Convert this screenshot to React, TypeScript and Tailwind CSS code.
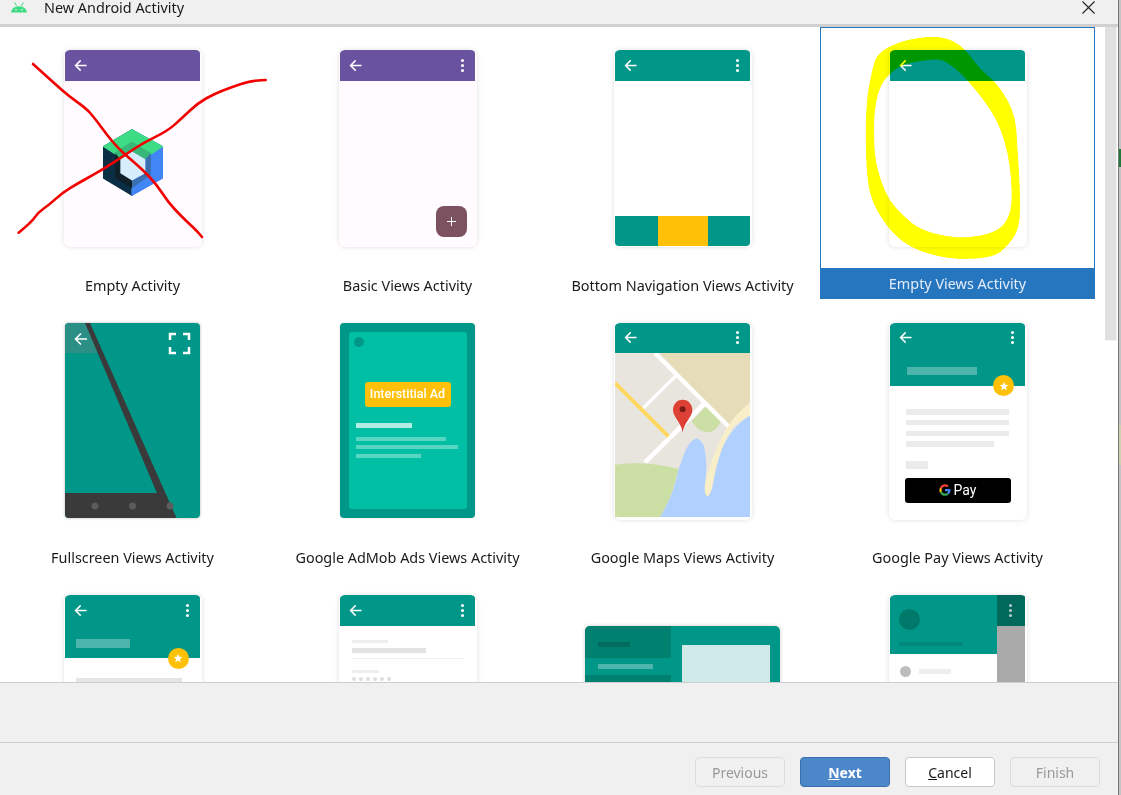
import React from "react";

const smooth = (p: number[][], closed = true) => {
  const n = p.length;
  const mid = (a: number[], b: number[]) => [(a[0] + b[0]) / 2, (a[1] + b[1]) / 2];
  if (closed) {
    const s = mid(p[n - 1], p[0]);
    let d = `M${s[0]} ${s[1]}`;
    for (let i = 0; i < n; i++) {
      const m = mid(p[i], p[(i + 1) % n]);
      d += `Q${p[i][0]} ${p[i][1]} ${m[0]} ${m[1]}`;
    }
    return d + "Z";
  }
  let d = `M${p[0][0]} ${p[0][1]}`;
  for (let i = 1; i < n - 1; i++) {
    const m = mid(p[i], p[i + 1]);
    d += `Q${p[i][0]} ${p[i][1]} ${m[0]} ${m[1]}`;
  }
  return d + `L${p[n - 1][0]} ${p[n - 1][1]}`;
};

const Arrow = () => (
  <svg width="13" height="13" viewBox="0 0 14 14" fill="none" stroke="#fff" strokeWidth="1.6">
    <path d="M13.500 7H2M7.200 1.500 1.700 7l5.500 5.500" />
  </svg>
);

const Dots = ({ color = "bg-white" }: { color?: string }) => (
  <div className="flex flex-col gap-[2px]">
    <span className={`w-[3px] h-[3px] rounded-full ${color}`} />
    <span className={`w-[3px] h-[3px] rounded-full ${color}`} />
    <span className={`w-[3px] h-[3px] rounded-full ${color}`} />
  </div>
);

const AppBar = ({ color = "bg-[#009688]", dots = true, h = "h-[30.5px]" }: { color?: string; dots?: boolean; h?: string }) => (
  <div className={`${h} ${color} rounded-t-[4px] shrink-0`}>
    <div className="h-[30px] flex items-center justify-between pl-[9px] pr-[11px]">
      <Arrow />
      {dots && <Dots />}
    </div>
  </div>
);

const Phone = ({ children, bg = "bg-white" }: { children?: React.ReactNode; bg?: string }) => (
  <div className={`relative w-[138px] h-[197px] rounded-[6px] px-[1.5px] ${bg} shadow-[0_0_5px_rgba(0,0,0,0.13)] flex flex-col overflow-hidden`}>
    {children}
  </div>
);

const Star = ({ className }: { className: string }) => (
  <div className={`absolute w-[21px] h-[21px] rounded-full bg-[#ffc107] flex items-center justify-center ${className}`}>
    <svg width="10" height="10" viewBox="0 0 24 24" fill="#fff"><path d="M12 2l3 7 7.500 .6-5.700 5 1.800 7.400L12 18l-6.600 4 1.800-7.400-5.700-5L9 9z" /></svg>
  </div>
);

const EmptyCompose = () => (
  <Phone bg="bg-[#fffbfe]">
    <AppBar color="bg-[#6952a0]" dots={false} />
    <div className="flex-1 flex items-start justify-center pt-[48.5px]">
      <svg width="60" height="67" viewBox="68 58 180 200" strokeLinejoin="round">
        <path d="M70 110 155 60V256L70 205Z" fill="#0a2f44" stroke="#0a2f44" strokeWidth="4" />
        <path d="M246 110 155 60V256L246 205Z" fill="#4285f4" stroke="#4285f4" strokeWidth="4" />
        <path d="M155 60 246 110 212 132 155 100 105 132 70 110Z" fill="#3ddc84" stroke="#3ddc84" strokeWidth="4" />
        <path d="M155 95 212 130 195 148 155 125 120 148 100 130Z" fill="#38b878" />
        <path d="M105 130 120 148V190L155 212V235L105 205Z" fill="#101f28" />
        <path d="M212 130V195L155 235V212L195 190V148Z" fill="#3a6fb0" />
        <path d="M155 125 195 148V190L155 212 120 190V148Z" fill="#d6eefb" />
      </svg>
    </div>
  </Phone>
);

const Basic = () => (
  <Phone bg="bg-[#fffbfe]">
    <AppBar color="bg-[#6952a0]" />
    <div className="flex-1 flex items-end justify-end pr-[8.5px] pb-[10px]">
      <div className="w-[31px] h-[31px] rounded-[8px] bg-[#7d5260] flex items-center justify-center">
        <svg width="9" height="9" viewBox="0 0 9 9" stroke="#fff" strokeWidth="1"><path d="M4.500 0v9M0 4.500h9" /></svg>
      </div>
    </div>
  </Phone>
);

const BottomNav = () => (
  <Phone>
    <AppBar />
    <div className="flex-1" />
    <div className="h-[30px] mb-[1.5px] flex rounded-b-[4px] overflow-hidden">
      <div className="w-[43px] bg-[#009688]" />
      <div className="w-[49.500px] bg-[#ffc107]" />
      <div className="flex-1 bg-[#009688]" />
    </div>
  </Phone>
);

const Fullscreen = () => (
  <div className="w-[135px] h-[195px] rounded-[4px] overflow-hidden shadow-[0_0_3px_rgba(0,0,0,0.3)]">
    <svg viewBox="0 0 135 195" className="w-full h-full">
      <rect width="135" height="195" fill="#009688" />
      <path d="M0 0H22L33 30H0Z" fill="#2b8f85" />
      <path d="M0 170H97L111 195H0Z" fill="#3a3a3a" />
      <path d="M20 0H25L111.500 195H102.500Z" fill="#3a3a3a" />
      <circle cx="30" cy="183" r="3.500" fill="#5c5c5c" />
      <circle cx="67.500" cy="183" r="3.500" fill="#5c5c5c" />
      <circle cx="105" cy="183" r="3.500" fill="#5c5c5c" />
      <path d="M22 16H11M16 10.500 10.500 16l5.500 5.500" stroke="#fff" strokeWidth="1.600" fill="none" />
      <path d="M105 17V11H111M118 11H124V17M124 24V30H118M111 30H105V24" stroke="#fff" strokeWidth="2.500" fill="none" />
    </svg>
  </div>
);

const AdMob = () => (
  <div className="w-[135px] h-[195px] rounded-[4px] bg-[#009688] px-[8.5px] py-[9px] shadow-[0_0_2px_rgba(0,0,0,0.15)]">
    <div className="relative h-full rounded-[3px] bg-[#00bfa5] pl-[7.5px] pr-[7px] pt-[50px]">
      <div className="absolute left-[5px] top-[5.500px] w-[10px] h-[10px] rounded-full bg-[#009688]" />
      <div className="ml-[8.5px] w-[86px] h-[25px] rounded-[3px] bg-[#ffc107] flex items-center justify-center text-white text-[12.5px] font-medium font-['Roboto',sans-serif] whitespace-nowrap">Interstitial Ad</div>
      <div className="mt-[16px] w-[56px] h-[5.500px] bg-white/70" />
      <div className="mt-[8.500px] w-[90px] h-[4px] bg-white/35" />
      <div className="mt-[4.500px] w-[102px] h-[4px] bg-white/35" />
      <div className="mt-[4.500px] w-[65px] h-[4px] bg-white/35" />
    </div>
  </div>
);

const Maps = () => (
  <Phone>
    <AppBar />
    <svg viewBox="45 40 405 492" className="w-[135px] h-[164px] shrink-0" preserveAspectRatio="none">
      <rect x="45" y="40" width="405" height="492" fill="#e8e5de" />
      <path d="M180 40H450V185L385 260Z" fill="#e6dcb8" />
      <path d="M275 245 318 200 362 245Q350 278 320 278 295 276 275 245Z" fill="#cbdfa5" />
      <path d="M165 40 385 260" stroke="#fff" strokeWidth="13" />
      <path d="M228 108 130 205" stroke="#fff" strokeWidth="10" />
      <path d="M315 190 135 368" stroke="#fff" strokeWidth="14" />
      <path d="M45 130 205 290" stroke="#ffd760" strokeWidth="12" />
      <path d="M45 375Q140 362 236 388 215 480 180 532H45Z" fill="#cbdfa5" />
      <path d="M450 190Q380 240 345 340 320 400 312 450 316 475 325 468 336 455 340 420 360 320 400 260 425 240 450 228Z" fill="#f8efc8" />
      <path d="M450 228Q395 260 365 330 345 390 338 440 330 470 322 470 313 465 314 440 325 370 312 320 300 294 285 297 262 310 250 350L236 388Q220 470 180 532H450Z" fill="#b0d0ff" />
      <path d="M248 180C230 180 219 195 219 210 219 232 242 245 248 277 254 245 277 232 277 210 277 195 266 180 248 180Z" fill="#dd4035" />
      <circle cx="248" cy="209" r="9" fill="#7a1a15" />
    </svg>
  </Phone>
);

const GPay = () => (
  <Phone>
    <AppBar h="h-[63px]" />
    <Star className="left-[104.5px] top-[52.5px]" />
    <div className="absolute left-[18px] top-[44px] w-[70px] h-[8.5px] bg-white/30" />
    <div className="pl-[15.5px] pt-[23.5px] flex flex-col gap-[5.3px]">
      <div className="h-[5.5px] w-[103px] bg-[#ebebeb]" />
      <div className="h-[5.5px] w-[103px] bg-[#ebebeb]" />
      <div className="h-[5.5px] w-[103px] bg-[#ebebeb]" />
      <div className="h-[5.5px] w-[88px] bg-[#ebebeb]" />
    </div>
    <div className="ml-[15.5px] mt-[14px] h-[8px] w-[22px] bg-[#ebebeb]" />
    <div className="ml-[14.5px] mt-[9px] w-[106px] h-[25px] rounded-[3px] bg-black flex items-center justify-center gap-[3px] shrink-0">
      <svg width="12" height="12" viewBox="0 0 24 24">
        <path d="M23 12.300c0-.9-.1-1.500-.2-2.200H12v4.200h6.200c-.3 1.500-1.100 2.700-2.400 3.500l3.600 2.800c2.200-2 3.600-5 3.600-8.300Z" fill="#4285f4" />
        <path d="M12 23.500c3 0 5.600-1 7.400-2.700l-3.600-2.800c-1 .7-2.300 1.100-3.800 1.100-2.900 0-5.400-2-6.300-4.600L2 17.300c1.900 3.800 5.700 6.200 10 6.200Z" fill="#34a853" />
        <path d="M5.700 14.500c-.5-1.400-.5-3 0-4.500L2 7.100C.4 10.100.4 13.900 2 17.300Z" fill="#fbbc05" />
        <path d="M12 5c1.600 0 3.100.6 4.200 1.700l3.200-3.200C17.500 1.700 14.900.6 12 .6 7.700.6 3.900 3 2 7.100L5.700 10C6.600 7.200 9.100 5 12 5Z" fill="#ea4335" />
      </svg>
      <span className="text-white text-[14px] leading-none font-['Roboto',sans-serif]">Pay</span>
    </div>
  </Phone>
);

const Scrolling = () => (
  <Phone>
    <AppBar h="h-[63px]" />
    <Star className="left-[104px] top-[52.5px]" />
    <div className="absolute left-[12px] top-[44px] w-[54px] h-[8.5px] bg-white/30" />
    <div className="ml-[10.5px] mt-[19.5px] h-[5.5px] w-[106px] bg-[#e5e5e5]" />
  </Phone>
);

const Settings = () => (
  <Phone>
    <AppBar />
    <div className="pl-[11.5px] pt-[14px]">
      <div className="h-[3px] w-[36px] bg-[#eeeeee]" />
      <div className="mt-[5px] h-[5px] w-[74px] bg-[#e2e2e2]" />
      <div className="mt-[5px] h-[1px] w-[111px] bg-[#eeeeee]" />
      <div className="mt-[11px] h-[3px] w-[27px] bg-[#eeeeee]" />
      <div className="mt-[4px] flex gap-[2.500px]">
        {[0, 1, 2, 3, 4, 5].map((i) => (
          <span key={i} className="w-[4.500px] h-[4.500px] rounded-full bg-[#dddddd]" />
        ))}
      </div>
    </div>
  </Phone>
);

const Tablet = () => (
  <div className="w-[195px] h-[120px] rounded-t-[5px] bg-[#009688] flex overflow-hidden shadow-[0_0_4px_rgba(0,0,0,0.2)]">
    <div className="w-[85.5px] shrink-0">
      <div className="h-[32px] bg-[#00806f] flex items-center pl-[12.5px] pt-[5px]"><div className="w-[32px] h-[5px] bg-[#006b5e]" /></div>
      <div className="h-[17px] flex items-center pl-[12.5px]"><div className="w-[55px] h-[5px] bg-white/30" /></div>
      <div className="h-[70px] bg-[#00806f]" />
    </div>
    <div className="ml-[11px] mt-[19px] w-[88.5px] h-[100px] bg-[#d0eaea]" />
  </div>
);

const Drawer = () => (
  <Phone>
    <div className="flex h-[59px] shrink-0">
      <div className="w-[106.5px] bg-[#009688] rounded-tl-[4px] pl-[9px] pt-[14px]">
        <div className="w-[21px] h-[21px] rounded-full bg-[#00796b]" />
        <div className="mt-[12px] w-[64px] h-[4px] bg-[#00897b]" />
      </div>
      <div className="flex-1 rounded-tr-[4px] flex flex-col">
        <div className="h-[30.5px] bg-[#00695c] flex items-center justify-center"><Dots color="bg-[#b5c9c5]" /></div>
        <div className="flex-1 bg-[#aaaaaa]" />
      </div>
    </div>
    <div className="flex flex-1">
      <div className="w-[106.5px] flex pl-[9.5px] pt-[11.5px] gap-[8px] items-start">
        <span className="w-[11.5px] h-[11.5px] rounded-full bg-[#bdbdbd]" />
        <span className="mt-[3.5px] w-[32px] h-[5px] bg-[#eeeeee]" />
      </div>
      <div className="flex-1 bg-[#aaaaaa]" />
    </div>
  </Phone>
);

const Cell = ({ label, selected, children, top = "pt-[23px]" }: { label?: string; selected?: boolean; children: React.ReactNode; top?: string }) => (
  <div className={`h-[272px] flex flex-col items-center ${top} ${selected ? "outline outline-1 -outline-offset-1 outline-[#2675bf]" : ""}`}>
    <div className="h-[197px] shrink-0 flex items-start">{children}</div>
    {label && (
      <div className={`mt-auto w-full h-[31px] flex items-center justify-center text-[14.4px] whitespace-nowrap ${selected ? "bg-[#2675bf] text-[#e4edf7]" : "text-[#1a1a1a] relative top-[2px]"}`}>
        {label}
      </div>
    )}
  </div>
);

const yellowOuter = [[235,20],[285,35],[320,65],[360,120],[400,150],[440,205],[465,265],[470,340],[475,420],[480,520],[475,600],[440,650],[400,680],[300,688],[220,675],[150,650],[100,610],[70,570],[40,520],[22,450],[18,300],[22,200],[40,110],[55,70],[110,40],[170,25]];
const yellowInner = [[235,85],[190,90],[130,100],[90,128],[60,165],[45,220],[40,280],[42,380],[60,450],[85,510],[130,560],[180,600],[260,622],[330,625],[400,610],[440,580],[458,525],[455,440],[445,370],[425,300],[395,240],[345,175],[300,125],[260,95]];
const red1 = [[33,64],[53.6,82.7],[69.6,96.7],[85.7,108],[94.6,118],[107,135],[118,148],[126.8,156],[143,170],[157,185],[168,202],[182,217],[196,230],[202,237]];
const red2 = [[18.6,232.7],[32,221.7],[37.5,213],[50,204],[62.5,192.7],[76.8,184],[92.9,175],[107,166.7],[125,155],[142.9,143],[167.9,130.7],[182,118],[198,103],[214,94],[232,87],[250,81],[265.7,80]];

const Button = ({ children, kind }: { children: React.ReactNode; kind: "off" | "next" | "cancel" }) => {
  const cls = {
    off: "bg-[#f0f0f0] border-[#dcdcdc] text-[#999999]",
    next: "bg-[#4c87c9] border-[#3c6fb0] text-white font-bold",
    cancel: "bg-white border-[#c9c9c9] text-[#1a1a1a]",
  }[kind];
  return <div className={`w-[90px] h-[30px] rounded-[4px] border flex items-center justify-center text-[14px] ${cls}`}>{children}</div>;
};

export default function App() {
  return (
    <div className="relative w-[1121px] h-[795px] bg-white overflow-hidden flex font-['Noto_Sans',sans-serif]">
      <div className="w-[1118px] h-full flex flex-col shrink-0">
        <div className="h-[27px] shrink-0 bg-[#f0f0f0] border-b-[3px] border-[#d0d0d0] flex items-start justify-between pl-[11px] pr-[23px]">
          <div className="flex items-start">
            <svg width="16" height="11" viewBox="0 0 16 11" className="mt-[1.5px]">
              <path d="M0 10.500C.4 7 3.500 4.200 8 4.200S15.600 7 16 10.500Z" fill="#3ddc84" />
              <path d="M3.800 .5 5.500 4M12.200 .5 10.500 4" stroke="#3ddc84" strokeWidth="1" />
              <circle cx="5" cy="7.800" r=".8" fill="#f0f0f0" />
              <circle cx="11" cy="7.800" r=".8" fill="#f0f0f0" />
            </svg>
            <span className="ml-[17px] text-[14.4px] text-[#1a1a1a] leading-[15px]">New Android Activity</span>
          </div>
          <svg width="13" height="13" viewBox="0 0 13 13" stroke="#222" strokeWidth="1.100" className="mt-[1px]"><path d="M.5.5l12 12M12.500.5l-12 12" /></svg>
        </div>

        <div className="flex h-[655px] shrink-0">
          <div className="flex-1 overflow-hidden">
            <div className="ml-[-5px] grid grid-cols-[275px_275px_275px_275px] auto-rows-[272.500px]">
              <Cell label="Empty Activity"><EmptyCompose /></Cell>
              <Cell label="Basic Views Activity"><Basic /></Cell>
              <Cell label="Bottom Navigation Views Activity"><BottomNav /></Cell>
              <Cell label="Empty Views Activity" selected><Phone><AppBar dots={false} /></Phone></Cell>
              <Cell label="Fullscreen Views Activity"><Fullscreen /></Cell>
              <Cell label="Google AdMob Ads Views Activity"><AdMob /></Cell>
              <Cell label="Google Maps Views Activity"><Maps /></Cell>
              <Cell label="Google Pay Views Activity"><GPay /></Cell>
              <Cell><Scrolling /></Cell>
              <Cell><Settings /></Cell>
              <Cell top="pt-[53.5px]"><Tablet /></Cell>
              <Cell><Drawer /></Cell>
            </div>
          </div>
          <div className="w-[13px] shrink-0">
            <div className="w-[12px] h-[314px] bg-[#e0e0e0] border-r border-b border-[#f2f2f2]" />
          </div>
        </div>

        <div className="flex-1 bg-[#f0f0f0] border-t border-[#cfcfcf] flex flex-col">
          <div className="h-[60px] shrink-0 border-b border-[#cfcfcf]" />
          <div className="flex-1 flex justify-end gap-[15px] pt-[14px] pr-[18px]">
            <Button kind="off">Previous</Button>
            <Button kind="next"><u>N</u>ext</Button>
            <Button kind="cancel"><u>C</u>ancel</Button>
            <Button kind="off">Finish</Button>
          </div>
        </div>
      </div>

      <div className="w-[3px] h-full border-l border-[#777777] bg-[#c4c4c4] flex flex-col">
        <div className="h-[149px]" />
        <div className="h-[18px] bg-[#1f7a3c]" />
        <div className="h-[258px]" />
        <div className="h-[40px] bg-[#cfd0b0]" />
      </div>

      <svg className="absolute inset-0 pointer-events-none" width="1121" height="795" viewBox="0 0 1121 795">
        <g className="mix-blend-multiply">
          <path transform="translate(860 30) scale(0.33333)" fillRule="evenodd" fill="#ffff00" stroke="#ffff00" strokeWidth="3" d={smooth(yellowOuter) + smooth(yellowInner)} />
        </g>
        <path d={smooth(red1, false)} fill="none" stroke="#f20000" strokeWidth="2.600" strokeLinecap="round" />
        <path d={smooth(red2, false)} fill="none" stroke="#f20000" strokeWidth="2.600" strokeLinecap="round" />
      </svg>
    </div>
  );
}
